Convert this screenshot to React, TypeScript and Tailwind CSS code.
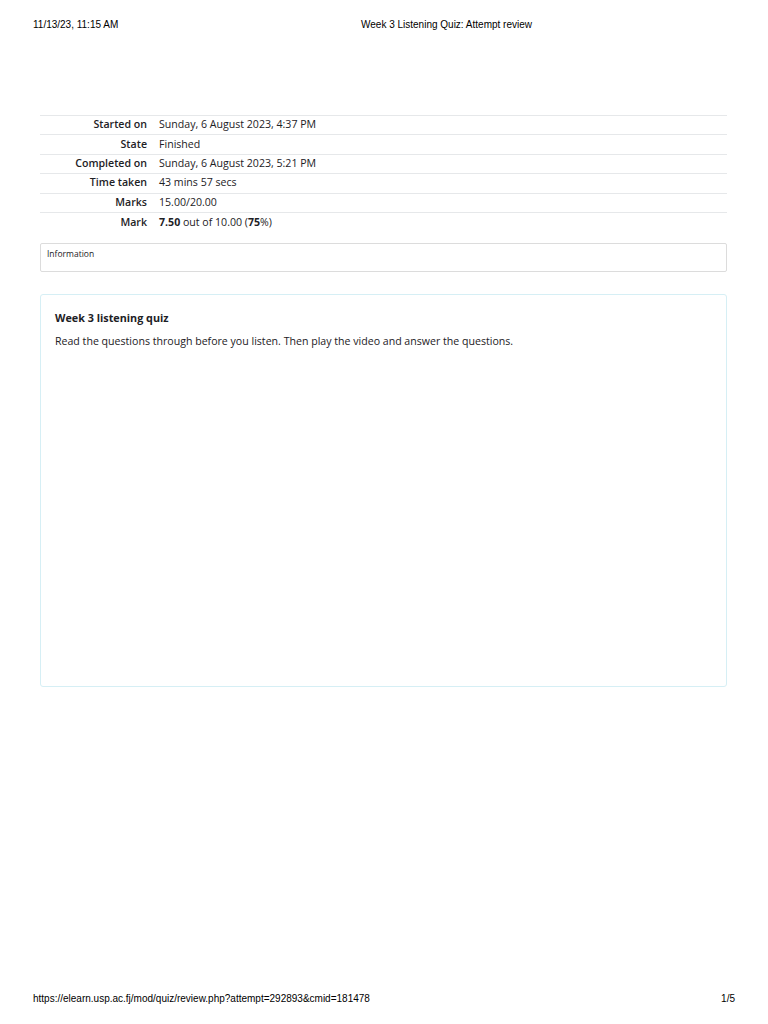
import React from "react";

const rows: { label: string; value: React.ReactNode }[] = [
  { label: "Started on", value: "Sunday, 6 August 2023, 4:37 PM" },
  { label: "State", value: "Finished" },
  { label: "Completed on", value: "Sunday, 6 August 2023, 5:21 PM" },
  { label: "Time taken", value: "43 mins 57 secs" },
  { label: "Marks", value: "15.00/20.00" },
  {
    label: "Mark",
    value: (
      <>
        <span className="font-bold">7.50</span> out of 10.00 (<span className="font-bold">75</span>%)
      </>
    ),
  },
];

export default function App() {
  return (
    <div className="w-[768px] h-[1024px] bg-white flex flex-col text-[#1d2125]">
      <div className="h-[48px] flex items-center px-[33px] text-[10px] text-black" style={{ fontFamily: '"Liberation Sans", Arial, sans-serif' }}>
        <span className="w-[328px]">11/13/23, 11:15 AM</span>
        <span>Week 3 Listening Quiz: Attempt review</span>
      </div>
      <div className="flex-1 pl-[40px] pr-[41px] pt-[67px] text-[10.6px]" style={{ fontFamily: '"Open Sans", "Noto Sans", sans-serif' }}>
        <div className="border-t border-[#e6e8ea]">
          {rows.map((r) => (
            <div key={r.label} className="flex h-[19.4px] items-center border-b border-[#e6e8ea] last:border-b-0">
              <div className="w-[107px] text-right font-semibold">{r.label}</div>
              <div className="pl-[12px]">{r.value}</div>
            </div>
          ))}
        </div>
        <div className="mt-[11px] h-[29px] border border-[#dcdcdc] rounded-[2px] px-[6px] pt-[4px] text-[8.5px]">
          Information
        </div>
        <div className="mt-[22px] h-[393px] border border-[#d6eff5] rounded-[3px] px-[14px] pt-[15px]">
          <div className="font-bold text-[10.8px]">Week 3 listening quiz</div>
          <div className="mt-[7px]">Read the questions through before you listen. Then play the video and answer the questions.</div>
        </div>
      </div>
      <div className="h-[52px] flex items-start justify-between px-[33px] pt-[19px] text-[10px] text-black" style={{ fontFamily: '"Liberation Sans", Arial, sans-serif' }}>
        <span>https://elearn.usp.ac.fj/mod/quiz/review.php?attempt=292893&amp;cmid=181478</span>
        <span>1/5</span>
      </div>
    </div>
  );
}
